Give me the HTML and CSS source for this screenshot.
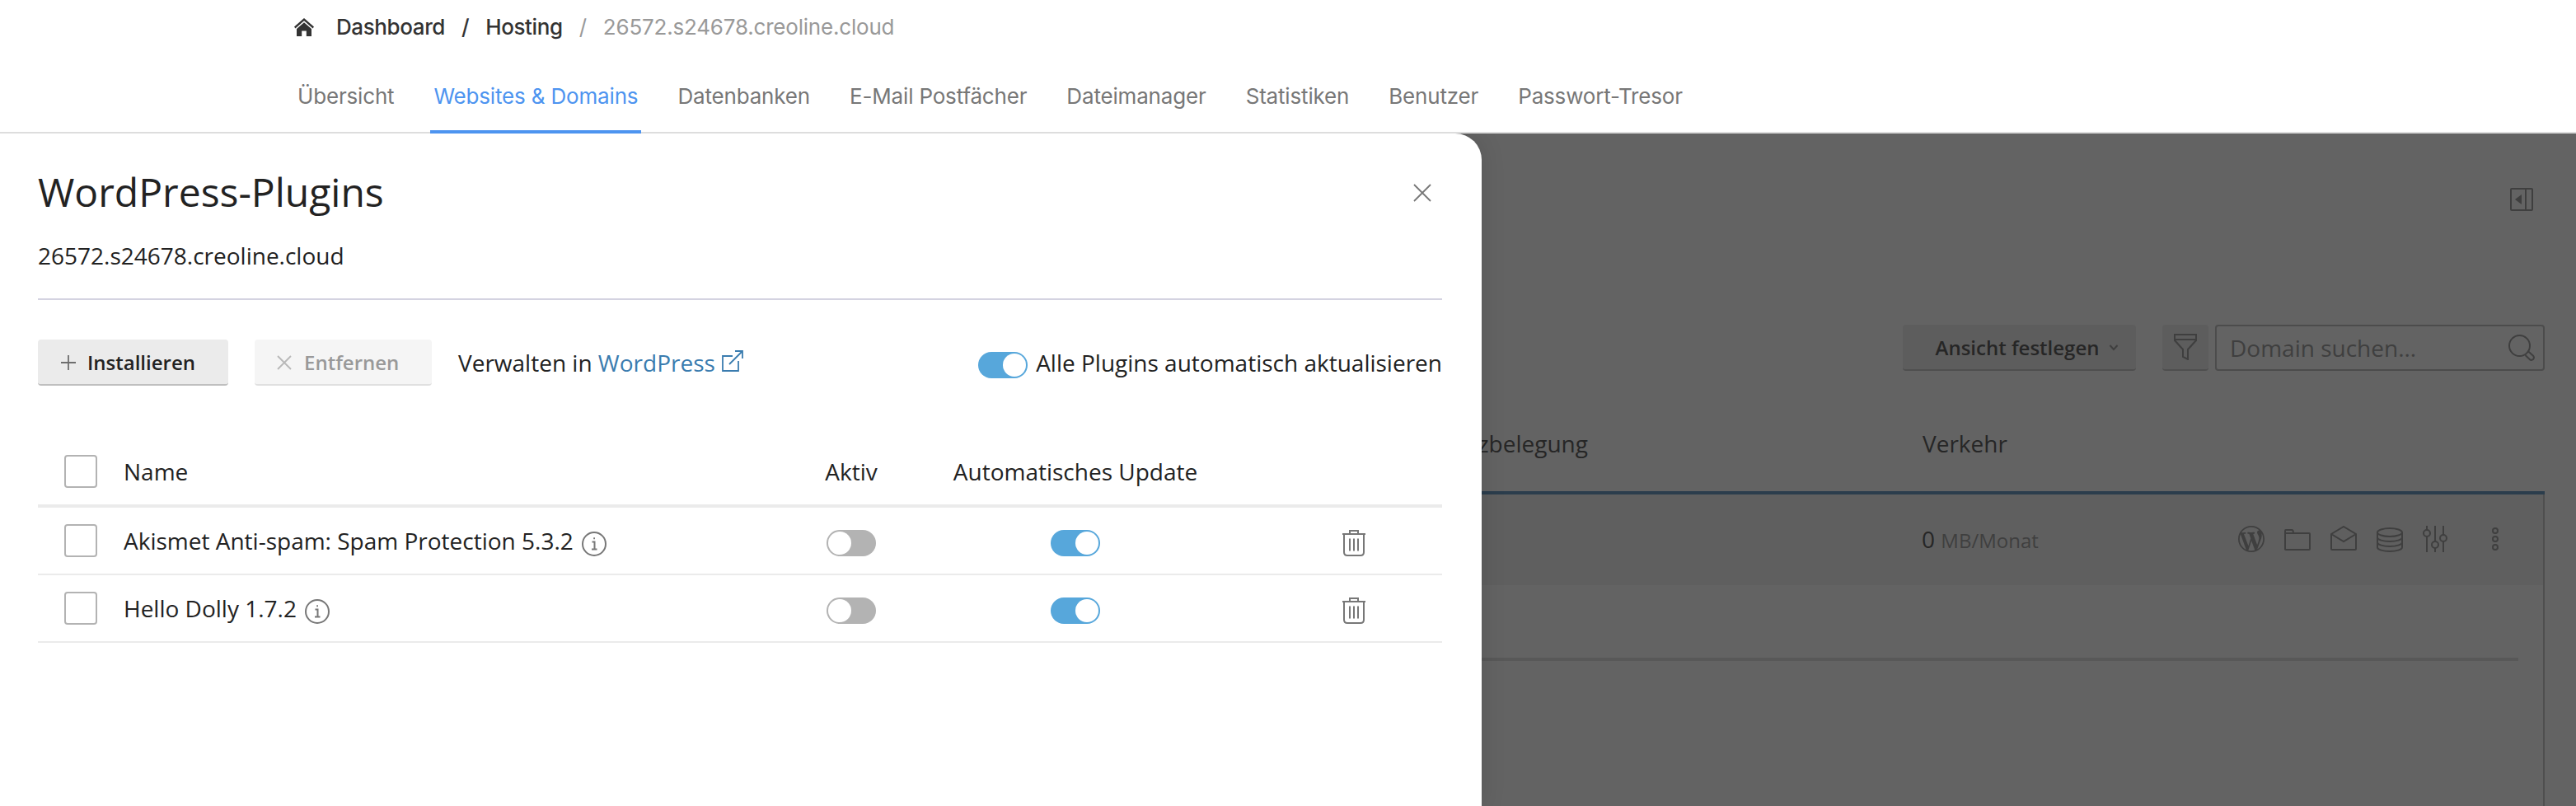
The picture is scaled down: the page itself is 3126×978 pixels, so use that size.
FILE: index.html
```html
<!DOCTYPE html>
<html lang="de">
<head>
  <meta charset="UTF-8">
  <meta name="viewport" content="width=device-width, initial-scale=1.0">
  <title>WordPress-Plugins</title>
  <link rel="stylesheet" href="styles.css">
</head>
<body>
  <header class="header">
    <nav class="breadcrumb">
      <svg class="home" width="24" height="22" viewBox="0 0 24 22"><path d="M12 0 24 10.5 22.6 12.4 12 3.2 1.4 12.4 0 10.5Z"/><path d="M12 5.2 21 13v9h-6.2v-6.6H9.2V22H3v-9Z"/></svg>
      <a class="crumb">Dashboard</a>
      <span class="slash">/</span>
      <a class="crumb">Hosting</a>
      <span class="slash muted">/</span>
      <span class="crumb muted">26572.s24678.creoline.cloud</span>
    </nav>
    <nav class="tabs">
      <a class="tab">Übersicht</a>
      <a class="tab active">Websites &amp; Domains</a>
      <a class="tab">Datenbanken</a>
      <a class="tab">E-Mail Postfächer</a>
      <a class="tab">Dateimanager</a>
      <a class="tab">Statistiken</a>
      <a class="tab">Benutzer</a>
      <a class="tab">Passwort-Tresor</a>
    </nav>
  </header>

  <div class="stage">
    <section class="drawer">
      <div class="drawer-head">
        <div class="drawer-title">
          <h1>WordPress-Plugins</h1>
          <svg class="close" width="22" height="22" viewBox="0 0 22 22"><path d="M1 1 21 21M21 1 1 21"/></svg>
        </div>
        <p class="subtitle">26572.s24678.creoline.cloud</p>
      </div>

      <div class="toolbar">
        <button class="btn btn-install"><svg width="18" height="18" viewBox="0 0 18 18"><path d="M9 0V18M0 9H18"/></svg>Installieren</button>
        <button class="btn btn-remove" disabled><svg width="18" height="18" viewBox="0 0 18 18"><path d="M1 1 17 17M17 1 1 17"/></svg>Entfernen</button>
        <div class="manage">Verwalten in <a class="link">WordPress</a>
          <svg class="external" width="26" height="26" viewBox="0 0 26 26"><path d="M13 7H1V25H20V13M9 17 25 1M16 1H25V10"/></svg>
        </div>
        <label class="auto-all"><span class="toggle on"></span>Alle Plugins automatisch aktualisieren</label>
      </div>

      <div class="plugins">
        <div class="plugin-row plugin-head">
          <span class="checkbox"></span>
          <span>Name</span>
          <span class="center">Aktiv</span>
          <span class="center">Automatisches Update</span>
        </div>
        <div class="plugin-row">
          <span class="checkbox"></span>
          <span class="name">Akismet Anti-spam: Spam Protection 5.3.2
            <svg class="info" width="30" height="30" viewBox="0 0 30 30"><circle cx="15" cy="15" r="14"/><path d="M12.5 12.5H15.5V21.5M12 21.5H18.5M14.2 8.3H16"/></svg>
          </span>
          <span class="center"><span class="toggle"></span></span>
          <span class="center"><span class="toggle on"></span></span>
          <span class="remove"><svg width="28" height="32" viewBox="0 0 28 32"><path d="M0 5H28M9 5V1H19V5M2 5V27Q2 31 6 31H22Q26 31 26 27V5"/><path d="M9 10.500V25.500M14 10.500V25.500M19 10.500V25.500"/></svg></span>
        </div>
        <div class="plugin-row">
          <span class="checkbox"></span>
          <span class="name">Hello Dolly 1.7.2
            <svg class="info" width="30" height="30" viewBox="0 0 30 30"><circle cx="15" cy="15" r="14"/><path d="M12.5 12.5H15.5V21.5M12 21.5H18.5M14.2 8.3H16"/></svg>
          </span>
          <span class="center"><span class="toggle"></span></span>
          <span class="center"><span class="toggle on"></span></span>
          <span class="remove"><svg width="28" height="32" viewBox="0 0 28 32"><path d="M0 5H28M9 5V1H19V5M2 5V27Q2 31 6 31H22Q26 31 26 27V5"/><path d="M9 10.500V25.500M14 10.500V25.500M19 10.500V25.500"/></svg></span>
        </div>
      </div>
    </section>

    <main class="page">
      <div class="page-top">
        <svg class="icon" width="28" height="28" viewBox="0 0 28 28"><rect x="1" y="1" width="26" height="26" rx="1"/><path d="M19 1V27"/><path class="solid" d="M14 8V20L6 14Z"/></svg>
      </div>

      <div class="page-tools">
        <div class="dim-btn view">Ansicht festlegen<svg class="icon" width="12" height="8" viewBox="0 0 12 8"><path d="M1.500 1 6 6 10.500 1"/></svg></div>
        <div class="dim-btn filter"><svg class="icon" width="28" height="32" viewBox="0 0 28 32"><path d="M1 1H27V8L17 19V31L11 28V19L1 8ZM1 7H27"/></svg></div>
        <div class="search"><span>Domain suchen...</span><svg class="icon" width="32" height="32" viewBox="0 0 32 32"><circle cx="13.500" cy="13.500" r="12.500"/><path d="M20.500 25 26 30.300Q28 31.600 30 30Q31.700 28 30.300 26L24.500 20.800"/></svg></div>
      </div>

      <div class="domains-head">
        <span class="col-space">Platzbelegung</span>
        <span>Verkehr</span>
      </div>
      <div class="domains">
        <div class="domain-row">
          <span class="traffic">0 <small>MB/Monat</small></span>
          <div class="actions">
            <svg class="icon wp" width="32" height="32" viewBox="0 0 20 20"><path d="M20 10c0-5.510-4.490-10-10-10C4.480 0 0 4.490 0 10c0 5.520 4.480 10 10 10 5.510 0 10-4.480 10-10zM7.780 15.370L4.370 6.220c.55-.02 1.170-.08 1.170-.08.5-.06.44-1.130-.06-1.110 0 0-1.450.11-2.370.11-.18 0-.37 0-.58-.01C4.120 2.690 6.870 1.110 10 1.110c2.330 0 4.450.87 6.050 2.340-.68-.11-1.650.39-1.650 1.580 0 .74.45 1.360.9 2.100.35.61.55 1.360.55 2.460 0 1.490-1.400 5-1.400 5l-3.030-8.370c.54-.02.82-.17.82-.17.5-.05.44-1.250-.06-1.220 0 0-1.440.12-2.380.12-.87 0-2.330-.12-2.330-.12-.5-.03-.56 1.200-.06 1.220l.92.08 1.260 3.410zM17.410 10c.24-.64.74-1.870.43-4.250.7 1.290 1.050 2.710 1.050 4.250 0 3.290-1.730 6.240-4.400 7.780.97-2.590 1.940-5.200 2.920-7.780zM6.100 18.090C3.120 16.650 1.110 13.530 1.110 10c0-1.300.23-2.480.72-3.590C3.250 10.300 4.670 14.200 6.100 18.090zm4.030-6.630l2.580 6.980c-.86.29-1.760.45-2.710.45-.79 0-1.570-.11-2.290-.33.81-2.380 1.620-4.740 2.420-7.100z"/></svg>
            <svg class="icon" width="32" height="32" viewBox="0 0 32 32"><path d="M1 29V6Q1 5 2 5H9Q11 5 11 9H30Q31 9 31 10V28Q31 29 30 29H2Q1 29 1 28M1 9H11"/></svg>
            <svg class="icon" width="32" height="32" viewBox="0 0 32 32"><path d="M1 10 16 1 31 10V28Q31 29 30 29H2Q1 29 1 28ZM1 10 16 19 31 10"/></svg>
            <svg class="icon" width="32" height="32" viewBox="0 0 32 32"><ellipse cx="16" cy="8" rx="15" ry="5"/><path d="M1 8V26C1 32.500 31 32.500 31 26V8M1 14C1 20.500 31 20.500 31 14M1 20C1 26.500 31 26.500 31 20"/></svg>
            <svg class="icon" width="32" height="32" viewBox="0 0 32 32"><path d="M5 0V5M5 13V32M15 0V19M15 27V32M25 0V11M25 19V32"/><circle cx="5" cy="9" r="4"/><circle cx="15" cy="23" r="4"/><circle cx="25" cy="15" r="4"/></svg>
            <svg class="icon more" width="8" height="32" viewBox="0 0 8 32"><circle cx="4" cy="6" r="3"/><circle cx="4" cy="16" r="3"/><circle cx="4" cy="26" r="3"/></svg>
          </div>
        </div>
        <div class="domain-line"></div>
      </div>
    </main>
  </div>
</body>
</html>
```
FILE: styles.css
```css
* {
  box-sizing: border-box;
}

body {
  margin: 0;
  height: 978px;
  display: flex;
  flex-direction: column;
  overflow: hidden;
  background: #fff;
  color: #222;
  font-family: 'Open Sans', sans-serif;
  font-size: 28px;
  line-height: 40px;
}

svg {
  flex: none;
  fill: none;
}

/* Header */
.header {
  flex: none;
  height: 162px;
  border-bottom: 2px solid #ddd;
  font-family: Inter, sans-serif;
  font-size: 26px;
}

.breadcrumb {
  display: flex;
  align-items: center;
  height: 66px;
  padding-left: 357px;
  color: #333;
  font-weight: 500;
  letter-spacing: -0.4px;
}

.home {
  fill: #333;
  margin-right: 27px;
}

.slash {
  margin: 0 20px;
}

.breadcrumb .muted {
  color: #999;
  font-weight: 400;
  letter-spacing: -0.2px;
}

.tabs {
  display: flex;
  height: 96px;
  padding-left: 357px;
  gap: 40px;
  color: #777;
  letter-spacing: -0.17px;
}

.tab {
  padding: 31px 4px 0;
  border-bottom: 4px solid transparent;
  white-space: nowrap;
}

.tab.active {
  color: #4d94f0;
  border-color: #4d94f0;
}

/* Drawer */
.stage {
  flex: 1;
  display: flex;
  overflow: hidden;
  background: #636363;
}

.drawer {
  width: 1798px;
  padding: 39px 48px 0 46px;
  background: #fff;
  border-radius: 0 32px 0 0;
  box-shadow: 0 0 30px rgba(0, 0, 0, 0.12);
  z-index: 1;
}

.drawer-head {
  padding-bottom: 32px;
  border-bottom: 2px solid #d4d3e1;
}

.drawer-title {
  display: flex;
  justify-content: space-between;
  align-items: center;
}

h1 {
  margin: 0;
  font-size: 48px;
  font-weight: 400;
  line-height: 64px;
}

.close {
  margin: 2px 13px 0 0;
  stroke: #777;
  stroke-width: 1.8;
}

.subtitle {
  margin: 25px 0 0;
}

.toolbar {
  display: flex;
  align-items: center;
  height: 56px;
  margin: 48px 0 64px;
}

.btn {
  display: flex;
  align-items: center;
  height: 56px;
  padding: 2px 26px 0;
  border: 0;
  border-bottom: 2px solid #bfbfbf;
  border-radius: 4px;
  background: #ebebeb;
  color: #222;
  font: 600 24px/40px 'Open Sans', sans-serif;
}

.btn svg {
  stroke: #6e6e6e;
  stroke-width: 1.8;
}

.btn-install {
  width: 231px;
  margin-right: 32px;
  padding-left: 28px;
  gap: 14px;
}

.btn-remove {
  width: 215px;
  margin-right: 32px;
  padding-left: 27px;
  gap: 15px;
  background: #f5f5f5;
  border-color: #e0e0e0;
  color: #999;
}

.btn-remove svg {
  stroke: #b8b8b8;
}

.manage {
  display: flex;
  align-items: center;
  white-space: pre;
}

.link {
  color: #3a7caf;
}

.external {
  margin: -4px 0 0 8px;
  stroke: #3a7caf;
  stroke-width: 1.8;
}

.auto-all {
  display: flex;
  align-items: center;
  margin-left: auto;
  gap: 10px;
}

.toggle {
  display: flex;
  flex: none;
  width: 60px;
  height: 32px;
  margin-top: 6px;
  padding: 2px;
  border-radius: 16px;
  background: #b3b3b3;
}

.toggle::before {
  content: "";
  width: 28px;
  height: 28px;
  border-radius: 50%;
  background: #fff;
}

.toggle.on {
  justify-content: flex-end;
  background: #57a7db;
}

/* Plugin table */
.plugin-row {
  display: grid;
  grid-template-columns: 72px 795px 176px 368px 1fr;
  align-items: center;
  height: 82px;
  padding-left: 32px;
  border-bottom: 2px solid #ebebeb;
}

.plugin-head {
  height: 84px;
  border-bottom-width: 4px;
}

.checkbox {
  width: 40px;
  height: 40px;
  border: 2px solid #b3b3b3;
  border-radius: 4px;
}

.name {
  display: flex;
  align-items: center;
  gap: 10px;
}

.info {
  margin-top: 8px;
  stroke: #777;
  stroke-width: 2;
}

.center {
  display: flex;
  justify-content: center;
}

.remove {
  display: flex;
  margin-top: 6px;
  padding-left: 140px;
  stroke: #777;
  stroke-width: 2;
}

/* Dimmed page behind the drawer */
.page {
  flex: 1;
  display: flex;
  flex-direction: column;
  padding: 66px 38px 0 0;
  color: #262626;
}

.icon {
  stroke: #3f3f3f;
  stroke-width: 2;
}

.solid,
.wp {
  fill: #3f3f3f;
  stroke: none;
}

.page-top {
  display: flex;
  justify-content: flex-end;
  height: 28px;
  padding-right: 14px;
}

.page-tools {
  display: flex;
  justify-content: flex-end;
  height: 56px;
  margin-top: 138px;
}

.dim-btn {
  display: flex;
  align-items: center;
  justify-content: center;
  border-bottom: 2px solid #4f4f4f;
  border-radius: 4px;
  background: #5d5d5d;
  font-size: 24px;
  font-weight: 600;
}

.view {
  width: 283px;
  margin-right: 32px;
  padding: 2px 0 0 19px;
  gap: 12px;
}

.filter {
  width: 56px;
  margin-right: 8px;
}

.search {
  display: flex;
  align-items: center;
  justify-content: space-between;
  width: 400px;
  padding: 0 10px 0 16px;
  border: 2px solid #4c4c4c;
  border-radius: 4px;
  color: #3f3f3f;
}

.domains-head {
  display: flex;
  height: 150px;
  padding-top: 68px;
  border-bottom: 4px solid #2b3d4c;
}

.col-space {
  display: flex;
  justify-content: flex-end;
  width: 129px;
  margin-right: 406px;
}

.domains {
  flex: 1;
  border-right: 2px solid #4f4f4f;
}

.domain-row {
  display: flex;
  align-items: center;
  justify-content: space-between;
  height: 110px;
  padding: 0 54px 2px 534px;
  background: #5f5f5f;
}

.traffic {
  margin-top: 2px;
}

.traffic small {
  font-size: 24px;
  color: #3f3f3f;
}

.actions {
  display: flex;
  gap: 24px;
}

.more {
  margin-left: 28px;
}

.domain-line {
  height: 4px;
  margin: 88px 30px 0 0;
  background: #585858;
}
```
